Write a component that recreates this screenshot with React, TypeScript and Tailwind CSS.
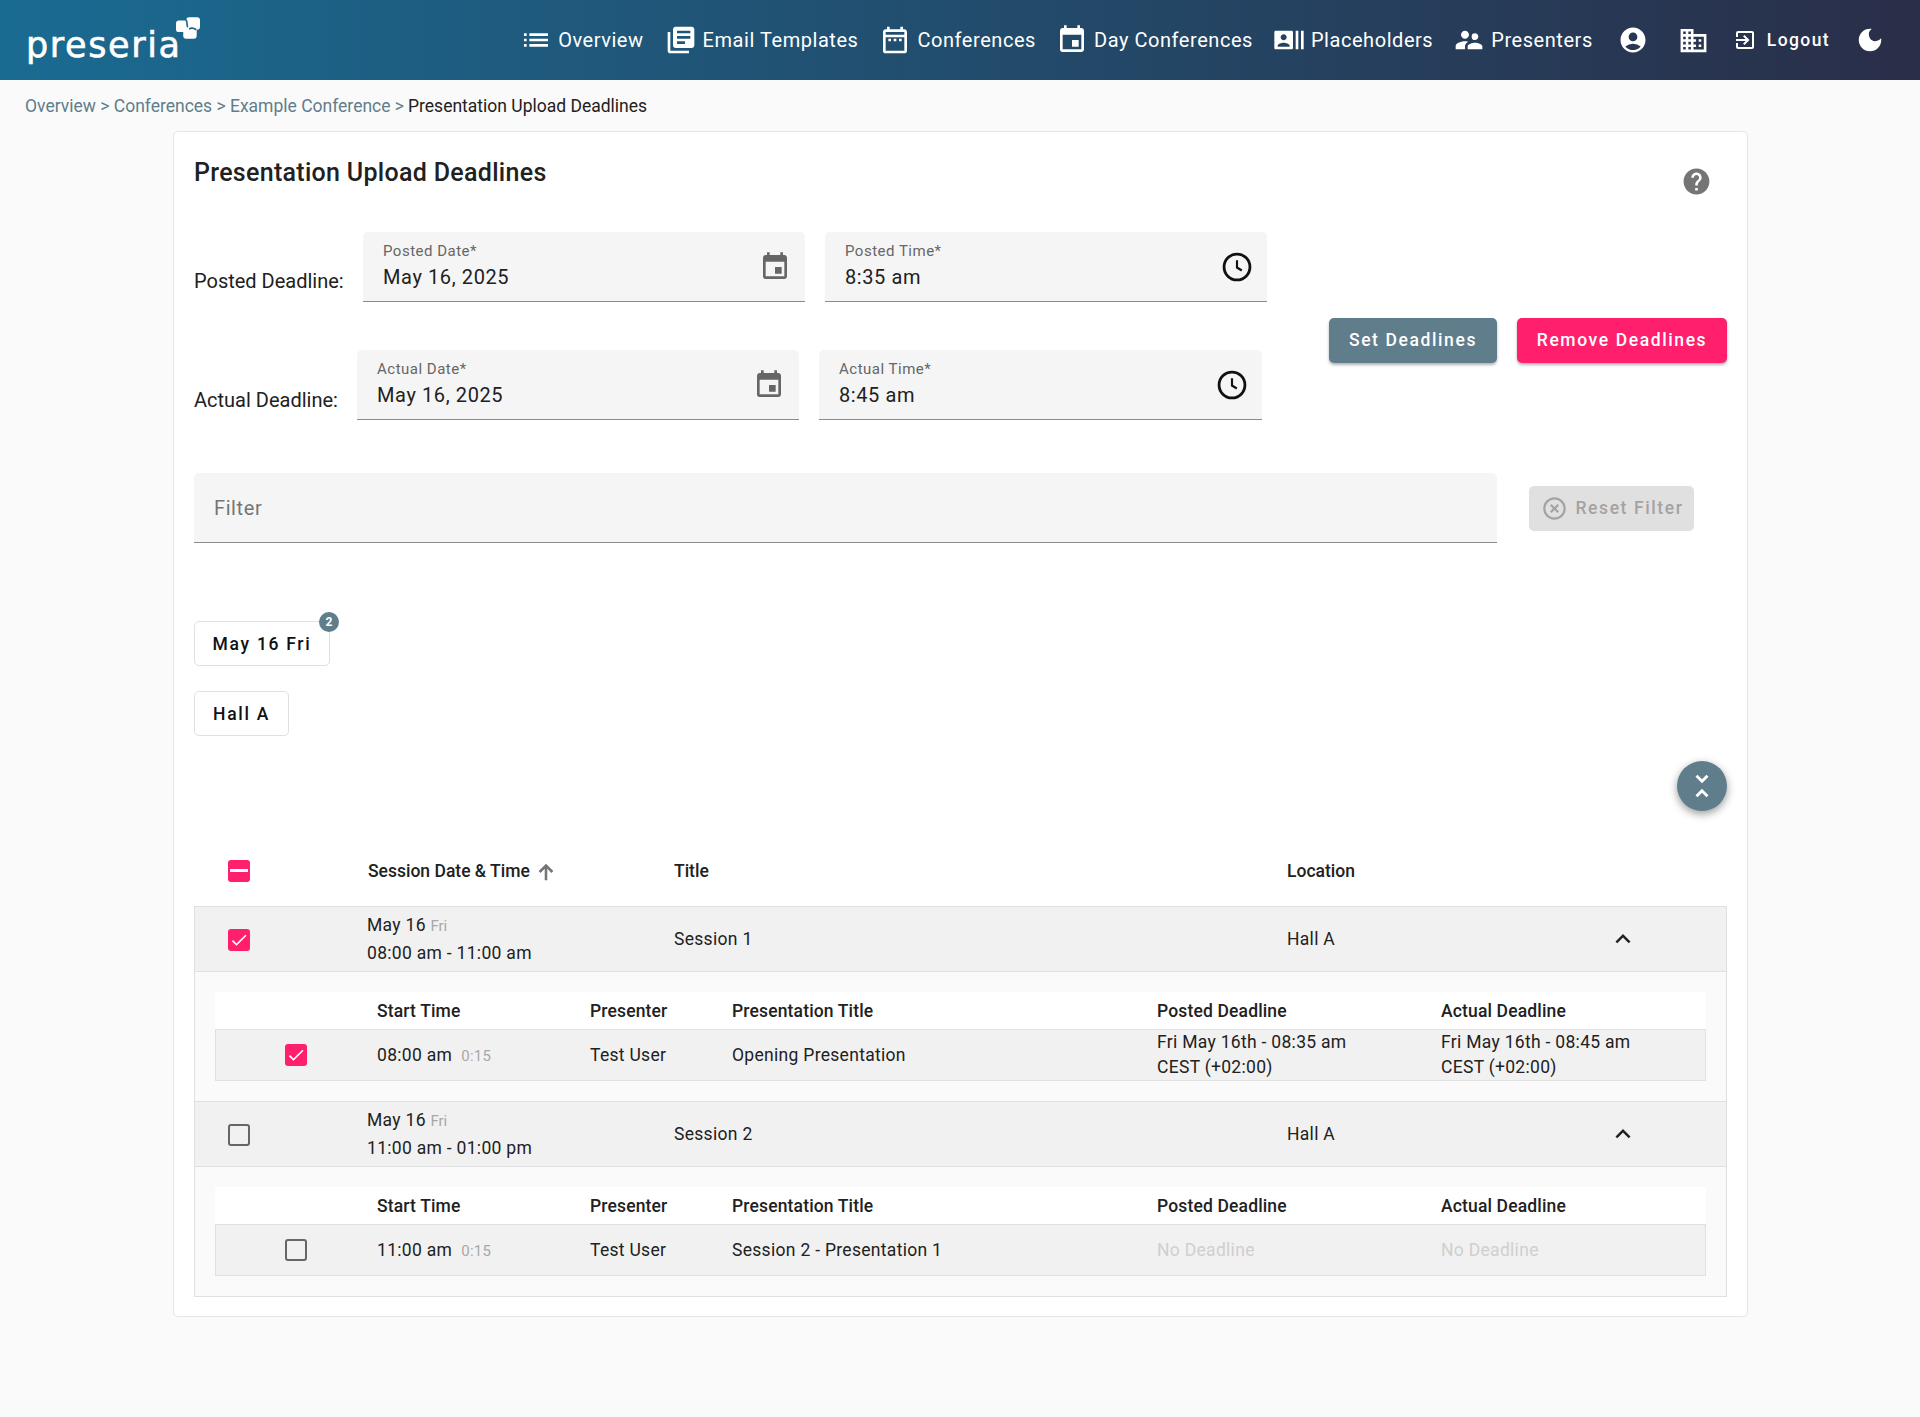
import React from "react";
import {
  MdList, MdLibraryBooks, MdOutlineDateRange, MdEvent, MdRecentActors, MdSupervisorAccount, MdAccountCircle,
  MdOutlineDomain, MdOutlineExitToApp, MdDarkMode, MdHelp, MdHighlightOff,
  MdKeyboardArrowUp, MdUnfoldLess, MdCheck,
} from "react-icons/md";

function Logo() {
  return (
    <div className="relative ml-[26px] flex h-[80px] w-[180px] items-center">
      <span className="mt-[11px] text-[35px] font-normal leading-none tracking-[1.6px] text-white [-webkit-text-stroke:0.6px_white] [font-family:'DejaVu_Sans',sans-serif]">preseria</span>
      <svg viewBox="0 0 73 65" className="absolute left-[150px] top-[17px] h-[22px] w-[24px]" fill="none">
        <rect x="31" y="0" width="42" height="38" rx="9" fill="#fff" />
        <rect x="0" y="10" width="40" height="35" rx="9" fill="#fff" />
        <rect x="22" y="30" width="41" height="35" rx="9" fill="#fff" />
        <path d="M30 8c8 8 0 16 6 22M40 36c8-6 16-2 22 2" stroke="#1f5f83" strokeWidth="5" />
      </svg>
    </div>
  );
}

function NavItem({ icon, label, className = "", textClass = "" }: { icon: React.ReactNode; label?: string; className?: string; textClass?: string }) {
  return (
    <div className={`flex items-center text-white ${className}`}>
      {icon}
      {label && <span className={`text-[20px] tracking-[0.55px] ${textClass}`}>{label}</span>}
    </div>
  );
}

function Header() {
  return (
    <header className="flex h-[80px] items-center justify-between bg-[linear-gradient(90deg,#1a6b92,#2a2e48)]">
      <Logo />
      <nav className="mr-[35px] flex items-center">
        <NavItem icon={<MdList size={32} />} label="Overview" className="gap-[6px]" />
        <NavItem icon={<MdLibraryBooks size={32} />} label="Email Templates" className="ml-[21px] gap-[6px]" />
        <NavItem icon={<MdOutlineDateRange size={32} />} label="Conferences" className="ml-[21px] gap-[6px]" />
        <NavItem icon={<MdEvent size={32} />} label="Day Conferences" className="ml-[20px] gap-[6px]" />
        <NavItem icon={<MdRecentActors size={32} />} label="Placeholders" className="ml-[20px] gap-[6px]" />
        <NavItem icon={<MdSupervisorAccount size={32} />} label="Presenters" className="ml-[20px] gap-[6px]" />
        <NavItem icon={<MdAccountCircle size={30} />} className="ml-[25px]" />
        <NavItem icon={<MdOutlineDomain size={31} />} className="ml-[30px]" />
        <NavItem icon={<MdOutlineExitToApp size={24} />} label="Logout" className="ml-[24px] gap-[10px]" textClass="!text-[17.5px] font-medium !tracking-[1.4px]" />
        <NavItem icon={<MdDarkMode size={30} />} className="ml-[25px]" />
      </nav>
    </header>
  );
}

function Field({ label, value, icon, className }: { label: string; value: string; icon: React.ReactNode; className: string }) {
  return (
    <div className={`relative h-[70px] rounded-t-[5px] border-b border-b-[#8c8c8c] bg-[#f5f5f5] px-[20px] ${className}`}>
      <div className="pt-[10px] text-[15px] leading-[18px] tracking-[0.5px] text-[#666]">{label}</div>
      <div className="mt-[4px] text-[20px] leading-[26px] tracking-[0.6px] text-[#212121]">{value}</div>
      <div className="absolute right-[14px] top-[19px]">{icon}</div>
    </div>
  );
}

function Check({ state, className = "" }: { state: "on" | "off" | "mixed"; className?: string }) {
  if (state === "off") return <span className={`block size-[22px] rounded-[3px] border-[2.5px] border-[#666] ${className}`} />;
  return (
    <span className={`flex size-[22px] items-center justify-center rounded-[3px] bg-[#ff1f6d] text-white ${className}`}>
      {state === "on" ? <MdCheck size={20} /> : <span className="h-[2.5px] w-[18px] bg-white" />}
    </span>
  );
}

const clock = (
  <svg viewBox="0 0 24 24" width={32} height={32} fill="none" stroke="#111" strokeWidth="2.1">
    <circle cx="12" cy="12" r="9.7" />
    <path d="M12 7v5.4l3.6 2.2" strokeWidth="1.6" />
  </svg>
);

const arrowUp = (
  <svg viewBox="0 0 24 24" width={22} height={22} fill="none" stroke="#757575" strokeWidth="2.8">
    <path d="M12 21V5M5 12l7-7 7 7" />
  </svg>
);

function SubTable({ checked, time, title, posted, actual }: { checked: boolean; time: string; title: string; posted: string[] | null; actual: string[] | null }) {
  const dl = (lines: string[] | null) => lines
    ? <div className="leading-[25px]">{lines.map((l) => <div key={l}>{l}</div>)}</div>
    : <div className="text-[#cfcfcf]">No Deadline</div>;
  return (
    <div className="pb-[20px] pl-[20px] pr-[20px] pt-[20px]">
      <div className="grid h-[37px] grid-cols-[162px_213px_142px_425px_1fr] items-center bg-white pt-[1px] font-medium tracking-[0.15px]">
        <div /><div>Start Time</div><div>Presenter</div><div>Presentation Title</div>
        <div className="grid grid-cols-[284px_1fr]"><div>Posted Deadline</div><div>Actual Deadline</div></div>
      </div>
      <div className="grid h-[52px] grid-cols-[161px_213px_142px_425px_1fr] items-center border border-[#e0e0e0] bg-[#f1f1f1] tracking-[0.3px]">
        <div className="pl-[69px]"><Check state={checked ? "on" : "off"} /></div>
        <div className="flex items-baseline">{time}<span className="ml-[9px] text-[15px] text-[#a8a8a8]">0:15</span></div>
        <div>Test User</div>
        <div>{title}</div>
        <div className="grid grid-cols-[284px_1fr]">{dl(posted)}{dl(actual)}</div>
      </div>
    </div>
  );
}

function SessionRow({ state, time, title }: { state: "on" | "off"; time: string; title: string }) {
  return (
    <div className="relative grid h-[66px] grid-cols-[172px_307px_613px_1fr] items-center border-y border-[#e0e0e0] bg-[#f1f1f1] pt-[1px] tracking-[0.3px]">
      <div className="pl-[33px]"><Check state={state} /></div>
      <div className="leading-[27px]">
        <div>May 16 <span className="text-[15px] tracking-normal text-[#a8a8a8]">Fri</span></div>
        <div>{time}</div>
      </div>
      <div>{title}</div>
      <div>Hall A</div>
      <MdKeyboardArrowUp size={30} className="absolute left-[1413px] top-[17px] text-[#212121]" />
    </div>
  );
}

export default function App() {
  return (
    <div className="min-h-[1417px] bg-[#fafafa] text-[17.5px] text-[#212121] [font-family:Roboto,sans-serif]">
      <Header />
      <div className="flex h-[51px] items-center pl-[25px] pt-[2px] text-[17.5px] text-[#607d8b]">
        <span>Overview &gt; Conferences &gt; Example Conference &gt; </span>
        <span className="ml-[4px] text-[#212121]">Presentation Upload Deadlines</span>
      </div>
      <main className="relative ml-[173px] h-[1186px] w-[1575px] rounded-[5px] border border-[#e4e4e4] bg-white px-[20px]">
        <h1 className="pt-[25px] text-[25px] font-medium leading-[32px] tracking-[0.3px] text-[#212121]">Presentation Upload Deadlines</h1>
        <MdHelp size={31} className="absolute right-[35px] top-[34px] text-[#757575]" />

        <div className="mt-[43px] flex gap-[62px]">
          <div className="w-[1073px]">
            <div className="flex items-end gap-[20px]">
              <div className="w-[149px] whitespace-nowrap pb-[9px] text-[20px] leading-[24px]">Posted Deadline:</div>
              <Field label="Posted Date*" value="May 16, 2025" icon={<MdEvent size={32} className="text-[#666]" />} className="w-[442px]" />
              <Field label="Posted Time*" value="8:35 am" icon={clock} className="w-[442px]" />
            </div>
            <div className="mt-[48px] flex items-end gap-[20px]">
              <div className="w-[143px] whitespace-nowrap pb-[8px] text-[20px] leading-[24px]">Actual Deadline:</div>
              <Field label="Actual Date*" value="May 16, 2025" icon={<MdEvent size={32} className="text-[#666]" />} className="w-[442px]" />
              <Field label="Actual Time*" value="8:45 am" icon={clock} className="w-[443px]" />
            </div>
          </div>
          <div className="flex items-start gap-[20px] pt-[86px]">
            <button className="h-[45px] w-[168px] rounded-[5px] bg-[#607d8b] text-[17.5px] font-medium tracking-[1.6px] text-white shadow-[0_2px_3px_rgba(0,0,0,0.3)]">Set Deadlines</button>
            <button className="h-[45px] w-[210px] rounded-[5px] bg-[#ff1f6d] text-[17.5px] font-medium tracking-[1.6px] text-white shadow-[0_2px_3px_rgba(0,0,0,0.3)]">Remove Deadlines</button>
          </div>
        </div>

        <div className="mt-[53px] flex items-center">
          <div className="flex h-[70px] w-[1303px] items-center rounded-t-[5px] border-b border-b-[#8c8c8c] bg-[#f5f5f5] px-[20px] pt-[1px] text-[20px] tracking-[0.6px] text-[#757575]">Filter</div>
          <div className="ml-[32px] flex h-[45px] w-[165px] items-center justify-center gap-[7px] rounded-[5px] bg-[#e0e0e0] pl-[2px] pt-[1px] text-[17.5px] font-medium tracking-[1.6px] text-[#a3a3a3]">
            <MdHighlightOff size={27} />Reset Filter
          </div>
        </div>

        <div className="relative mt-[78px] flex h-[45px] w-[136px] items-center justify-center rounded-[5px] border border-[#e0e0e0] bg-white pt-[2px] text-[17.5px] font-medium tracking-[1.7px] text-[#111]">
          May 16 Fri
          <span className="absolute -right-[10px] -top-[10px] flex size-[20px] items-center justify-center rounded-full bg-[#607d8b] text-[12px] font-bold tracking-normal text-white">2</span>
        </div>
        <div className="mt-[25px] flex h-[45px] w-[95px] items-center justify-center rounded-[5px] border border-[#e0e0e0] bg-white pt-[2px] text-[17.5px] font-medium tracking-[1.7px] text-[#111]">Hall A</div>

        <div className="absolute right-[20px] top-[629px] flex size-[50px] items-center justify-center rounded-full bg-[#607d8b] text-white shadow-[0_3px_8px_rgba(0,0,0,0.4)]">
          <MdUnfoldLess size={34} />
        </div>

        <section className="mt-[97px]">
          <div className="grid h-[73px] grid-cols-[174px_306px_613px_1fr] items-center pt-[2px] font-medium">
            <div className="pl-[34px]"><Check state="mixed" /></div>
            <div className="flex items-center gap-[5px] pt-[2px]">Session Date &amp; Time {arrowUp}</div>
            <div className="pt-[2px]">Title</div>
            <div className="pt-[2px]">Location</div>
          </div>
          <div className="border-x border-b border-[#e0e0e0] bg-[#fafafa]">
            <SessionRow state="on" time="08:00 am - 11:00 am" title="Session 1" />
            <SubTable checked time="08:00 am" title="Opening Presentation" posted={["Fri May 16th - 08:35 am", "CEST (+02:00)"]} actual={["Fri May 16th - 08:45 am", "CEST (+02:00)"]} />
            <SessionRow state="off" time="11:00 am - 01:00 pm" title="Session 2" />
            <SubTable checked={false} time="11:00 am" title="Session 2 - Presentation 1" posted={null} actual={null} />
          </div>
        </section>
      </main>
    </div>
  );
}
